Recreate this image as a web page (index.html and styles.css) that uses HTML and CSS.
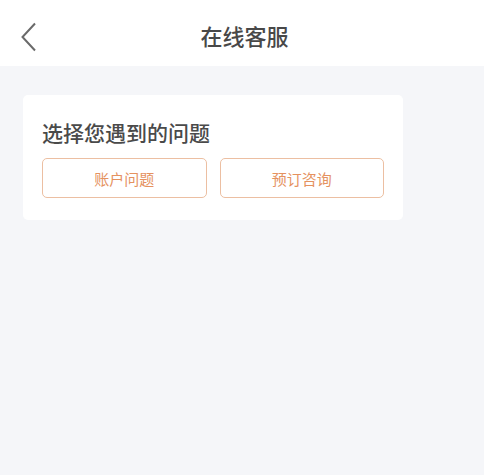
FILE: index.html
```html
<!DOCTYPE html>
<html lang="zh">
<head>
<meta charset="utf-8">
<link rel="stylesheet" href="styles.css">
</head>
<body>
<header class="nav">
  <svg class="back" width="16" height="30" viewBox="0 0 16 30"><polyline points="14,1.5 1.5,15 14,28.5" fill="none" stroke="#6a6a6a" stroke-width="2"/></svg>
  <div class="title">在线客服</div>
</header>
<main class="page">
  <section class="card">
    <h2 class="heading">选择您遇到的问题</h2>
    <div class="options">
      <button class="opt">账户问题</button>
      <button class="opt">预订咨询</button>
    </div>
  </section>
</main>
</body>
</html>
```
FILE: styles.css
```css
html, body { margin: 0; padding: 0; }
body {
  width: 484px; height: 475px; overflow: hidden;
  background: #f5f6f9;
  font-family: "Noto Sans CJK SC", "Noto Sans", sans-serif;
}
.nav {
  height: 66px; background: #fff;
  position: relative;
  display: flex; align-items: center; justify-content: center;
}
.back { position: absolute; left: 21px; top: 22px; }
.title { font-size: 22px; font-weight: 500; color: #484848; margin-left: 5px; margin-top: 4px; }
.page { padding: 29px 0 0 23px; }
.card {
  width: 380px; height: 125px; box-sizing: border-box;
  background: #fff; border-radius: 5px;
  padding: 22px 19px 0 19px;
}
.heading {
  margin: 0; font-size: 21px; font-weight: 500; color: #4a4a4a;
  line-height: 30px;
}
.options { display: flex; gap: 13px; margin-top: 11px; }
.opt {
  width: 165px; height: 40px; box-sizing: border-box;
  border: 1px solid #ecbfa2; border-radius: 5px; background: #fff;
  color: #e5925f; font-size: 15px; font-family: inherit;
  padding: 0;
}
```
